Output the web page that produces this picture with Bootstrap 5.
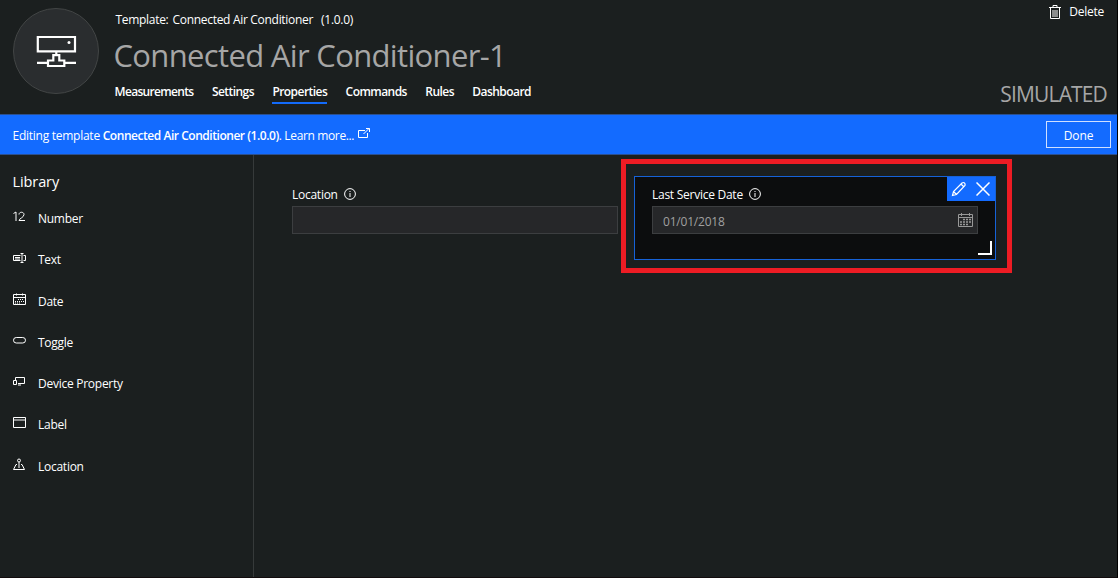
<!DOCTYPE html>
<html lang="en">
<head>
<meta charset="utf-8">
<meta name="viewport" content="width=device-width, initial-scale=1">
<title>Connected Air Conditioner-1</title>
<link rel="stylesheet" href="https://cdn.jsdelivr.net/npm/bootstrap@5.3.0/dist/css/bootstrap.min.css">
<style>
body{background:#fff;font-family:"Open Sans","Noto Sans",sans-serif;font-size:12px;line-height:16px;letter-spacing:-.26px;color:#fff;overflow:hidden}
.shell{width:1118px;height:578px;background:#1b1f1f;border-right:1px solid #000;border-bottom:1px solid #120c0d}
.topbar{height:114px}
.avatar{width:86px;height:86px;margin:8px 0 0 13px;background:#2a2d2f;border:1px solid #424545}
.avatar svg{margin:27px 0 0 22px;overflow:visible}
.heading{margin-left:16.5px;padding-top:12px}
.meta{letter-spacing:-.3px}
.title{font-size:31px;line-height:40px;letter-spacing:-.66px;color:#a6a6a6;font-weight:400;margin:7px 0 0 -2px}
.tabs{margin:9px 0 0 -1px}
.tabs .nav-link{padding:0;color:#fff;font-weight:600;height:20px;letter-spacing:-.55px;margin-right:18.4px}
.tabs .nav-link:first-child{letter-spacing:-.67px}
.tabs .nav-link.active{border-bottom:2px solid #136bfb}
.side{padding:4px 9px 0 0}
.status{font-size:21px;line-height:28px;letter-spacing:-.85px;color:#a6a6a6;margin:60px 1px 0 0}
.banner{height:41px;background:#136bff;border-top:1px solid #2b4f8f;border-bottom:1px solid #2b4f8f;padding:0 6px 0 12.5px}
.banner p{padding-top:2px;margin:0;white-space:pre}
.banner strong{font-weight:600;letter-spacing:-.46px}
.banner a{color:#fff;text-decoration:none;letter-spacing:-.36px}
.done{width:65px;height:27px;border:1px solid #d0e0ff;border-radius:0;color:#fff;font-size:12px;padding:2px 0 0;letter-spacing:-.1px}
.library{width:254px;border-right:1px solid #363a3a;padding:18px 0 0 12.5px}
.library h2{font-size:14.5px;line-height:18px;letter-spacing:-.1px;margin:0 0 20px;font-weight:400}
.tool{height:41.25px}
.tool svg{width:13px;height:14px;margin-right:12.5px;overflow:visible}
.work{padding-left:20px}
.tile{width:344px;height:84px;padding:9px 0 0 17px;border:1px solid transparent;position:relative}
.tile.plain{margin-top:21px}
.tile.selected{width:362px;border-color:#1662d8;background:#0c0d0e}
.tile label{height:16px;padding-top:1px;display:flex;align-items:center;gap:6.5px}
.tile label svg{margin-top:-1px}
.field{height:28px;width:326px;background:#262729;border:1px solid #3c3e40;color:#a0a0a0;margin-top:4px;padding:0 4px 0 10px;letter-spacing:-.2px}
.callout{width:391px;height:114px;border:5px solid #ed1c24;padding:12px 0 0 8px;margin:4px 0 0 3px}
.actions{position:absolute;right:0;top:0;width:48px;height:24px;padding-right:1px;background:#136bff}
.grip{position:absolute;right:3px;bottom:4px;width:14px;height:14px;border:solid #fff;border-width:0 2px 2px 0}
svg{fill:none;stroke:#fff;stroke-width:1;flex:none}
</style>
</head>
<body>
<div class="shell d-flex flex-column">
<header class="topbar d-flex">
  <div class="avatar rounded-circle d-flex">
    <svg width="42" height="32" viewBox="0 0 42 32"><path stroke-width="2.200" d="M1.800 1H39v14.300H1.800zM20.300 15v4M1 26.800h11M28.500 26.800H40M17.300 19.200h6v5.300h5v5.500H12v-5.500h5.300z"/><circle cx="33" cy="6.500" r="1.500" fill="#fff" stroke="none"/></svg>
  </div>
  <div class="heading">
    <div class="meta d-flex"><span class="me-1">Template:</span><span class="me-2">Connected Air Conditioner</span><span>(1.0.0)</span></div>
    <h1 class="title">Connected Air Conditioner-1</h1>
    <nav class="tabs nav flex-nowrap">
      <a class="nav-link">Measurements</a><a class="nav-link">Settings</a><a class="nav-link active">Properties</a><a class="nav-link">Commands</a><a class="nav-link">Rules</a><a class="nav-link">Dashboard</a>
    </nav>
  </div>
  <div class="side ms-auto d-flex flex-column align-items-end">
    <div class="d-flex gap-2 me-1"><svg width="12" height="15" viewBox="0 0 12 15"><path d="M0 3.500h12M4 3V1.500h4V3M1.500 4v10.500h9V4M4 6v7M6 6v7M8 6v7"/></svg><span>Delete</span></div>
    <div class="status">SIMULATED</div>
  </div>
</header>
<div class="banner d-flex align-items-center">
  <p>Editing template <strong>Connected Air Conditioner (1.0.0)</strong><a>. Learn more...</a></p>
  <svg class="ms-1" width="12" height="10" viewBox="0 0 12 10" style="margin-top:-4px"><path d="M7 2.500H.500v7h9V5M5.500 6l5.500-5.500M8 .500h3.500V4"/></svg>
  <button class="done btn ms-auto">Done</button>
</div>
<main class="d-flex flex-grow-1">
  <aside class="library">
    <h2>Library</h2>
    <div class="tool d-flex"><svg viewBox="0 0 13 14"><path d="M.500 2.500L3 1v9M6 3.500C6 .500 11 .500 11 3.500S6 7.500 6 9.500h6"/></svg><span>Number</span></div>
    <div class="tool d-flex"><svg viewBox="0 0 13 14"><path d="M7.500 3.500H.500v5h7M2 5.500h5M2 7h5M10.500 3.500h2v5h-2M7.500 1.500h3M7.500 10.500h3M9 1.500v9"/></svg><span>Text</span></div>
    <div class="tool d-flex"><svg viewBox="0 0 13 14"><path d="M.500.500h12v10H.500zM.500 3.500h12M3.500-.500v2M9.500-.500v2"/><path d="M5 5.500h6M2 7.500h9M2 9h6" stroke-dasharray="1 1" stroke-width="1.200"/></svg><span>Date</span></div>
    <div class="tool d-flex"><svg viewBox="0 0 13 14"><rect x=".5" y="2.500" width="12" height="5.500" rx="2.750"/></svg><span>Toggle</span></div>
    <div class="tool d-flex"><svg viewBox="0 0 13 14"><path d="M2.500 4V1.500h9v6H5M.500 4.500h3v4h-3zM5 9h3"/></svg><span>Device Property</span></div>
    <div class="tool d-flex"><svg viewBox="0 0 13 14"><path d="M.500.500h12v10H.500zM.500 3h12"/></svg><span>Label</span></div>
    <div class="tool d-flex"><svg viewBox="0 0 13 14"><circle cx="6" cy="1.500" r="1.500"/><path d="M6 3v6M4 5.500H3L.500 10.500h11L9 5.500H8"/></svg><span>Location</span></div>
  </aside>
  <section class="work d-flex align-items-start">
    <div class="tile plain"><label>Location<svg width="12" height="12" viewBox="0 0 12 12"><circle cx="6" cy="6" r="5.400"/><path d="M6 5v4M6 3v1"/></svg></label><div class="field"></div></div>
    <div class="callout">
      <div class="tile selected"><label>Last Service Date<svg width="12" height="12" viewBox="0 0 12 12"><circle cx="6" cy="6" r="5.400"/><path d="M6 5v4M6 3v1"/></svg></label>
        <div class="field d-flex align-items-center justify-content-between"><span class="pt-1">01/01/2018</span><svg width="15" height="14" viewBox="0 0 15 14" style="stroke:#999"><path d="M.500 1.500h14v12H.500zM.500 4.500h14M3.500 0v3M11.500 0v3"/><path d="M5 6.500h8M2 9h11M2 11.500h8" stroke-dasharray="2 1" stroke-width="1.500"/></svg></div>
        <div class="actions d-flex align-items-center justify-content-around"><svg width="16" height="16" viewBox="0 0 16 16"><path stroke-width="1.200" d="M1.500 14.500l1-4L11 2q1.500-1 2.500 0t.500 2.500l-8.500 9zM10 3l3 3M2.500 10.500l3 3"/></svg><svg width="14" height="14" viewBox="0 0 14 14"><path stroke-width="1.500" d="M.500.500l13 13M13.500.500l-13 13"/></svg></div>
        <div class="grip"></div>
      </div>
    </div>
  </section>
</main>
</div>
<script src="https://cdn.jsdelivr.net/npm/bootstrap@5.3.0/dist/js/bootstrap.bundle.min.js"></script>
</body>
</html>
